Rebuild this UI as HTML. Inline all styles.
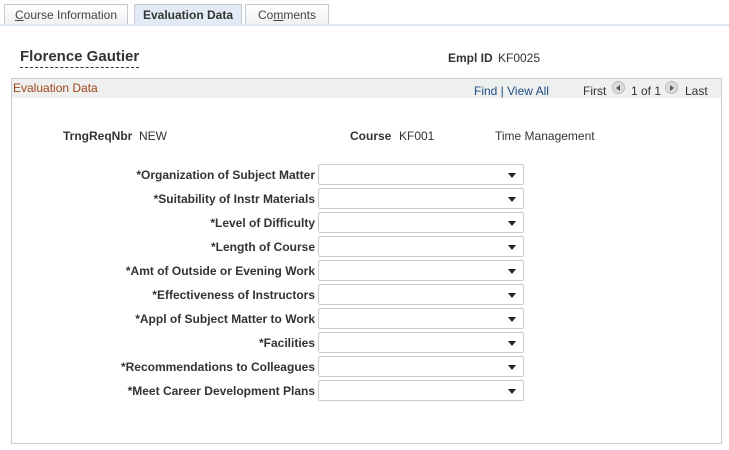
<!DOCTYPE html>
<html><head><style>
*{margin:0;padding:0;box-sizing:border-box}
body{width:729px;height:450px;background:#fff;font-family:"Liberation Sans",Arial,sans-serif;font-size:12px;color:#333;position:relative;overflow:hidden}
.a{position:absolute;white-space:nowrap}
.tab{position:absolute;top:4px;height:21px;border:1px solid #c4c9cf;border-bottom:none;background:linear-gradient(#fff,#eef0f2);font-size:12px;color:#444;text-align:center;line-height:20px}
.tab.on{background:#e2ebf5;color:#333;font-weight:bold;height:22px}
.lbl{position:absolute;right:414px;font-weight:bold;color:#333;white-space:nowrap}
.sel{position:absolute;left:318px;width:206px;height:21px;border:1px solid #c9ccd0;border-radius:2px;background:#fff}
.sel:after{content:"";position:absolute;right:7px;top:8px;border-left:4px solid transparent;border-right:4px solid transparent;border-top:5px solid #222}
</style></head><body>
<div class="tab" style="left:4px;width:124px"><u>C</u>ourse Information</div>
<div class="tab on" style="left:134px;width:108px">Evaluation Data</div>
<div class="tab" style="left:245px;width:84px">Co<u>m</u>ments</div>
<div class="a" style="left:0;top:24px;width:729px;height:2px;background:#dfe7f0"></div>
<div class="a" style="left:20px;top:48px;font-size:15px;font-weight:bold;color:#333;border-bottom:1px dashed #333;padding-bottom:2px;line-height:17px">Florence Gautier</div>
<div class="a" style="left:448px;top:51px;font-weight:bold">Empl ID</div>
<div class="a" style="left:498px;top:51px">KF0025</div>
<div class="a" style="left:11px;top:78px;width:711px;height:366px;border:1px solid #c9ccd0"></div>
<div class="a" style="left:12px;top:79px;width:709px;height:19px;background:#eef0ef"></div>
<div class="a" style="left:13px;top:81px;color:#a1441a">Evaluation Data</div>
<div class="a" style="left:474px;top:84px;color:#1f4e85">Find | View All</div>
<div class="a" style="left:583px;top:84px">First</div>
<div class="a" style="left:612px;top:81px;width:13px;height:13px;border-radius:50%;background:#dcdcdc;border:1px solid #bbb"></div>
<div class="a" style="left:616px;top:85px;border-top:3px solid transparent;border-bottom:3px solid transparent;border-right:4px solid #555"></div>
<div class="a" style="left:631px;top:84px">1 of 1</div>
<div class="a" style="left:665px;top:81px;width:13px;height:13px;border-radius:50%;background:#dcdcdc;border:1px solid #bbb"></div>
<div class="a" style="left:670px;top:85px;border-top:3px solid transparent;border-bottom:3px solid transparent;border-left:4px solid #555"></div>
<div class="a" style="left:685px;top:84px">Last</div>
<div class="a" style="left:63px;top:129px;font-weight:bold">TrngReqNbr</div>
<div class="a" style="left:139px;top:129px">NEW</div>
<div class="a" style="left:350px;top:129px;font-weight:bold">Course</div>
<div class="a" style="left:399px;top:129px">KF001</div>
<div class="a" style="left:495px;top:129px">Time Management</div>

<div class="lbl" style="top:168px">*Organization of Subject Matter</div><div class="sel" style="top:164px"></div>
<div class="lbl" style="top:192px">*Suitability of Instr Materials</div><div class="sel" style="top:188px"></div>
<div class="lbl" style="top:216px">*Level of Difficulty</div><div class="sel" style="top:212px"></div>
<div class="lbl" style="top:240px">*Length of Course</div><div class="sel" style="top:236px"></div>
<div class="lbl" style="top:264px">*Amt of Outside or Evening Work</div><div class="sel" style="top:260px"></div>
<div class="lbl" style="top:288px">*Effectiveness of Instructors</div><div class="sel" style="top:284px"></div>
<div class="lbl" style="top:312px">*Appl of Subject Matter to Work</div><div class="sel" style="top:308px"></div>
<div class="lbl" style="top:336px">*Facilities</div><div class="sel" style="top:332px"></div>
<div class="lbl" style="top:360px">*Recommendations to Colleagues</div><div class="sel" style="top:356px"></div>
<div class="lbl" style="top:384px">*Meet Career Development Plans</div><div class="sel" style="top:380px"></div>
</body></html>
